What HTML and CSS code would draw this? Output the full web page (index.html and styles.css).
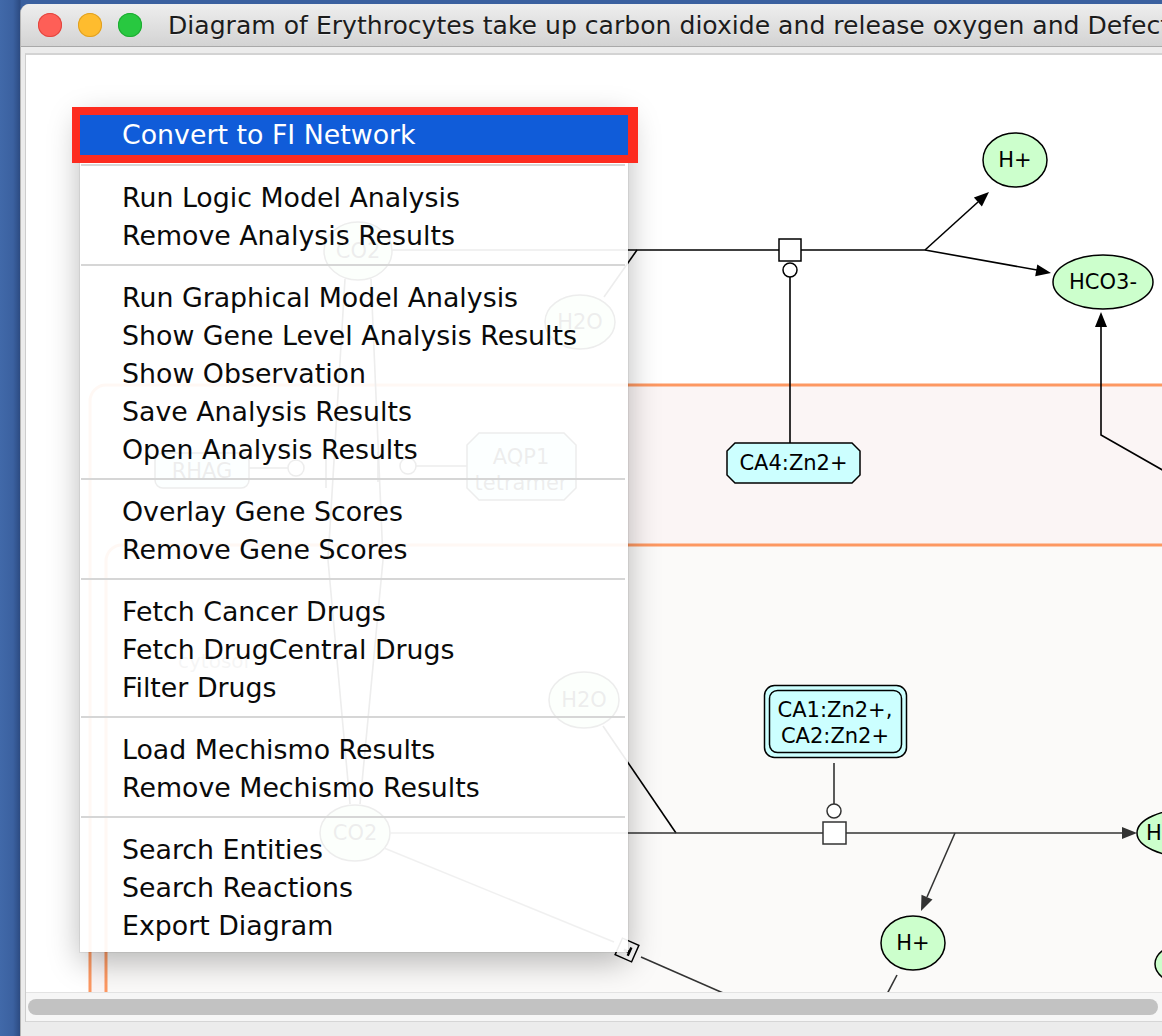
FILE: index.html
```html
<!DOCTYPE html>
<html>
<head>
<meta charset="utf-8">
<title>Diagram</title>
<link rel="stylesheet" href="styles.css">
</head>
<body>
<div class="desktop">
  <div class="window">
    <div class="titlebar">
      <div class="lights">
        <span class="light red"></span>
        <span class="light yellow"></span>
        <span class="light green"></span>
      </div>
      <div class="title">Diagram of Erythrocytes take up carbon dioxide and release oxygen and Defective</div>
    </div>
    <div class="body">
      <div class="panel">
        <div class="canvas">
          <svg class="diagram" viewBox="26 55 1150 937" width="1150" height="937" xmlns="http://www.w3.org/2000/svg">
            <rect x="26" y="55" width="1150" height="937" fill="#ffffff"/>
            <rect x="90" y="385" width="1200" height="720" rx="16" fill="#fbf5f5" stroke="#fd9862" stroke-width="3"/>
            <rect x="106" y="545" width="1200" height="600" rx="16" fill="#fbfaf9" stroke="#fd9862" stroke-width="3"/>
            <text x="178" y="668" class="clabel">cytosol</text>

            <!-- hidden (under menu) elements -->
            <g class="ln">
              <line x1="391" y1="250" x2="779" y2="250"/>
              <line x1="604" y1="297" x2="637" y2="250"/>
              <polyline points="345,279 328,560 350,804" fill="none"/>
              <polyline points="371,279 383,560 360,804" fill="none"/>
              <line x1="249" y1="468" x2="288" y2="468"/>
              <path d="M326 450 V488" />
              <line x1="378" y1="452" x2="378" y2="482"/>
              <line x1="416" y1="466" x2="467" y2="466"/>
              <line x1="603" y1="726" x2="676" y2="833"/>
            </g>
            <ellipse cx="358" cy="251" rx="34" ry="29" class="chem"/>
            <text x="358" y="258" class="lbl">CO2</text>
            <ellipse cx="580" cy="322" rx="35" ry="27" class="chem"/>
            <text x="580" y="329" class="lbl">H2O</text>
            <rect x="155" y="453" width="94" height="35" rx="8" class="prot"/>
            <text x="202" y="478" class="lbl">RHAG</text>
            <circle cx="296" cy="468" r="8" class="open"/>
            <circle cx="408" cy="466" r="8" class="open"/>
            <polygon points="479,433 564,433 576,445 576,488 564,500 479,500 467,488 467,445" class="cplx"/>
            <text x="521" y="464" class="lbl">AQP1</text>
            <text x="521" y="490" class="lbl">tetramer</text>
            <ellipse cx="584" cy="700" rx="35" ry="28" class="chem"/>
            <text x="584" y="707" class="lbl">H2O</text>
            <ellipse cx="355" cy="833" rx="35" ry="28" class="chem"/>
            <text x="355" y="840" class="lbl">CO2</text>

            <!-- upper reaction -->
            <g class="ln">
              <line x1="801" y1="250" x2="925" y2="250"/>
              <line x1="925" y1="250" x2="978" y2="202"/>
              <line x1="925" y1="250" x2="1037" y2="270"/>
              <line x1="790" y1="277" x2="790" y2="443"/>
              <polyline points="1101,327 1101,435 1180,480" fill="none"/>
            </g>
            <polygon points="989,192 981.9,206.5 973.9,197.6" fill="#000"/>
            <polygon points="1051,273 1035.2,276.2 1037.3,264.4" fill="#000"/>
            <polygon points="1101,312 1095,327 1107,327" fill="#000"/>
            <rect x="779" y="239" width="22" height="22" class="open"/>
            <circle cx="790" cy="270" r="7" class="open"/>
            <ellipse cx="1015" cy="160" rx="32" ry="27" class="chem"/>
            <text x="1015" y="167" class="lbl">H+</text>
            <ellipse cx="1103" cy="282" rx="50" ry="27" class="chem"/>
            <text x="1103" y="289" class="lbl">HCO3-</text>
            <polygon points="735,443 852,443 860,451 860,475 852,483 735,483 727,475 727,451" class="cplx"/>
            <text x="793.5" y="470" class="lbl">CA4:Zn2+</text>

            <!-- lower reaction -->
            <g class="ln2">
              <line x1="390" y1="833" x2="823" y2="833"/>
              <line x1="846" y1="833" x2="1122" y2="833"/>
              <line x1="955" y1="833" x2="927" y2="897"/>
              <line x1="834" y1="763" x2="834" y2="804"/>
              <line x1="384" y1="848" x2="614" y2="942"/>
              <line x1="641" y1="957" x2="730" y2="996"/>
              <line x1="897" y1="975" x2="886" y2="996"/>
            </g>
            <polygon points="1137,833 1122,827 1122,839" fill="#333"/>
            <polygon points="921,911 932.5,899.6 921.5,894.8" fill="#333"/>
            <rect x="823" y="822" width="23" height="22" class="open2"/>
            <circle cx="834" cy="811" r="7" class="open2"/>
            <rect x="764.5" y="685.5" width="142" height="72" rx="10" class="cplx"/>
            <rect x="769.5" y="690.5" width="132" height="62" rx="8" class="cplx"/>
            <text x="835" y="717" class="lbl">CA1:Zn2+,</text>
            <text x="835" y="743" class="lbl">CA2:Zn2+</text>
            <ellipse cx="913" cy="943" rx="32" ry="27" class="chem"/>
            <text x="913" y="950" class="lbl">H+</text>
            <ellipse cx="1190" cy="833" rx="53" ry="24" class="chem"/>
            <text x="1146" y="840" class="lbl start">HCO3-</text>
            <ellipse cx="1192" cy="964" rx="37" ry="22" class="chem"/>
            <g transform="rotate(24 627 950)">
              <rect x="618" y="941" width="18" height="18" class="open"/>
              <path d="M624 951 H631 M630 946 V955" stroke="#000" stroke-width="2.4" fill="none"/>
            </g>
          </svg>

          <div class="menu">
            <div class="item active">Convert to FI Network</div>
            <div class="sep"></div>
            <div class="item">Run Logic Model Analysis</div>
            <div class="item">Remove Analysis Results</div>
            <div class="sep"></div>
            <div class="item">Run Graphical Model Analysis</div>
            <div class="item">Show Gene Level Analysis Results</div>
            <div class="item">Show Observation</div>
            <div class="item">Save Analysis Results</div>
            <div class="item">Open Analysis Results</div>
            <div class="sep"></div>
            <div class="item">Overlay Gene Scores</div>
            <div class="item">Remove Gene Scores</div>
            <div class="sep"></div>
            <div class="item">Fetch Cancer Drugs</div>
            <div class="item">Fetch DrugCentral Drugs</div>
            <div class="item">Filter Drugs</div>
            <div class="sep"></div>
            <div class="item">Load Mechismo Results</div>
            <div class="item">Remove Mechismo Results</div>
            <div class="sep"></div>
            <div class="item">Search Entities</div>
            <div class="item">Search Reactions</div>
            <div class="item">Export Diagram</div>
          </div>
          <div class="callout"></div>
        </div>
        <div class="hscroll"><div class="thumb"></div></div>
      </div>
    </div>
  </div>
</div>
</body>
</html>
```

FILE: styles.css
```css
* { box-sizing: border-box; }
html, body { margin: 0; padding: 0; }
body {
  width: 1162px;
  height: 1036px;
  overflow: hidden;
  background: #3b61a0;
  font-family: "DejaVu Sans", "Liberation Sans", sans-serif;
}
.desktop {
  height: 1036px;
  padding: 4px 0 0 20px;
  background: linear-gradient(90deg, #4169a9 0px, #3b61a0 13px, #2c4b82 20px, #3a609f 21px);
}
.window {
  width: 1180px;
  height: 1032px;
  background: #ececec;
  border-left: 1px solid #b4b4b4;
  border-radius: 9px 9px 0 0;
  overflow: hidden;
  display: flex;
  flex-direction: column;
}
.titlebar {
  flex: none;
  height: 43px;
  display: flex;
  align-items: center;
  padding-left: 17px;
  background: linear-gradient(#eeeeee, #d3d3d3);
  border-bottom: 1px solid #a9a9a9;
}
.lights { display: flex; gap: 16px; flex: none; }
.light { width: 24px; height: 24px; border-radius: 50%; display: block; }
.red { background: #fe5f57; box-shadow: inset 0 0 0 1px #e1463f; }
.yellow { background: #febc2e; box-shadow: inset 0 0 0 1px #dfa023; }
.green { background: #28c840; box-shadow: inset 0 0 0 1px #1eab32; }
.title {
  margin-left: 26px;
  font-size: 25.1px;
  color: #1c1c1c;
  white-space: nowrap;
  text-shadow: 0 1px 0 rgba(255,255,255,0.5);
}
.body {
  flex: 1;
  padding: 6px 0 0 4px;
  display: flex;
  flex-direction: column;
}
.panel {
  border-top: 2px solid #d3d3d3;
  border-left: 1px solid #cdcdcd;
  display: flex;
  flex-direction: column;
}
.canvas {
  position: relative;
  height: 937px;
  overflow: hidden;
}
.diagram { display: block; }
.diagram .ln line, .diagram .ln polyline, .diagram .ln path { stroke: #000; stroke-width: 1.6; }
.diagram .ln2 line { stroke: #333; stroke-width: 1.6; }
.diagram .chem { fill: #ccffcc; stroke: #000; stroke-width: 1.5; }
.diagram .cplx { fill: #ccffff; stroke: #000; stroke-width: 1.5; }
.diagram .prot { fill: #ccffff; stroke: #000; stroke-width: 1.5; }
.diagram .open { fill: #ffffff; stroke: #000; stroke-width: 1.5; }
.diagram .open2 { fill: #ffffff; stroke: #333; stroke-width: 1.5; }
.diagram .lbl {
  font-family: "DejaVu Sans", "Liberation Sans", sans-serif;
  font-size: 21px;
  fill: #000;
  text-anchor: middle;
}
.diagram .lbl.start { text-anchor: start; }
.diagram .clabel {
  font-family: "DejaVu Sans", "Liberation Sans", sans-serif;
  font-size: 20px;
  fill: #777;
}
.menu {
  position: absolute;
  left: 54px;
  top: 54px;
  width: 548px;
  padding: 6px 0 7px;
  background: rgba(255,255,255,0.93);
  box-shadow: 0 0 0 1px rgba(0,0,0,0.06), 0 10px 30px rgba(0,0,0,0.28);
  font-size: 26.8px;
  color: #0a0a0a;
}
.item {
  height: 38px;
  line-height: 38px;
  padding-left: 42px;
  white-space: nowrap;
}
.item.active {
  height: 40px;
  line-height: 40px;
  background: #105cd9;
  color: #ffffff;
}
.sep {
  height: 2px;
  margin: 9px 3px 13px 1px;
  background: #d6d6d6;
}
.callout {
  position: absolute;
  left: 46px;
  top: 52px;
  width: 566px;
  height: 56px;
  border-style: solid;
  border-color: #fd2b1f;
  border-width: 8px 10px 8px 8px;
}
.hscroll {
  flex: none;
  height: 30px;
  border-top: 1px solid #e3e3e3;
  border-bottom: 1px solid #d6d6d6;
  background: #f6f6f6;
  padding: 6px 0 0 2px;
}
.thumb {
  width: 1130px;
  height: 16px;
  border-radius: 8px;
  background: #c2c2c2;
}
```
